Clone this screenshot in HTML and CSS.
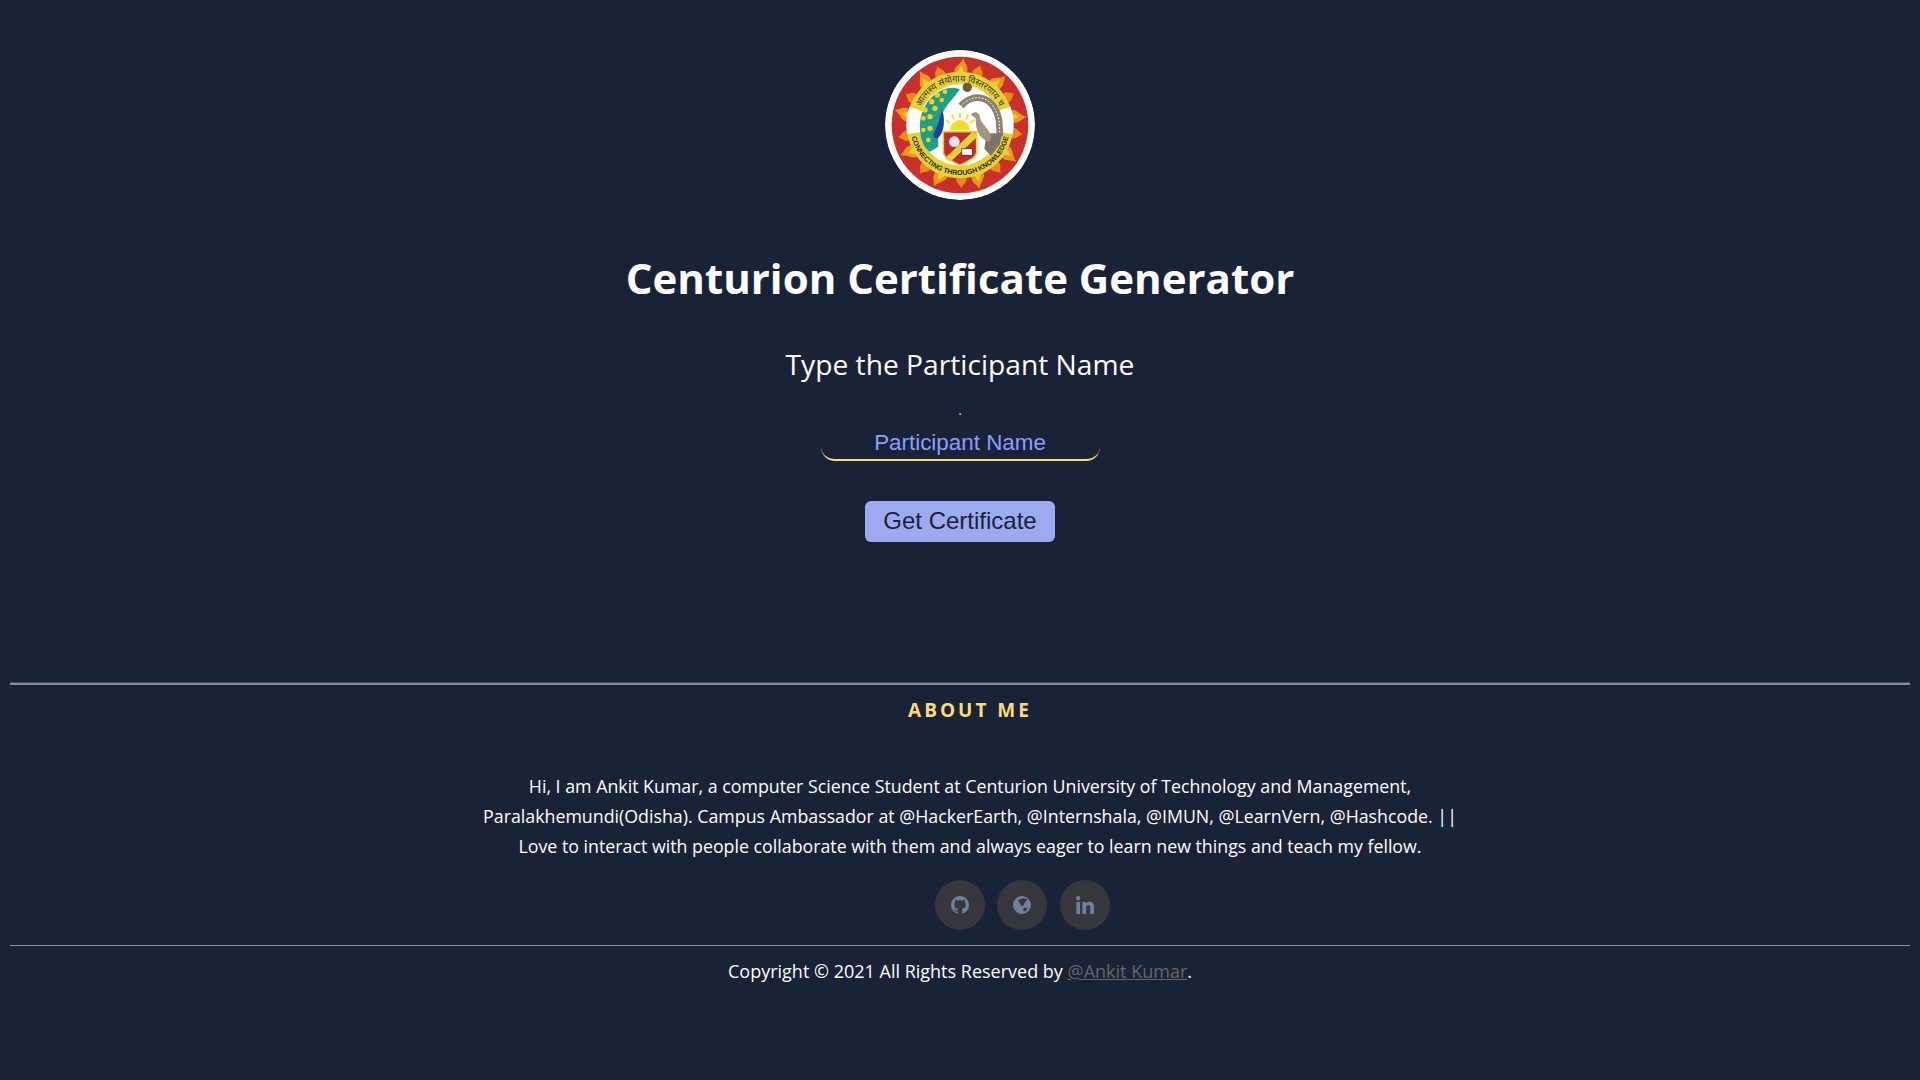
FILE: index.html
```html
<!DOCTYPE html>
<html lang="en">
<head>
  <meta charset="UTF-8" />
  <title>Centurion Certificate Generator</title>
  <link rel="stylesheet" href="styles.css">
</head>
<body>

  <div class="generator">
    <svg class="logo" viewBox="0 0 450 450" aria-label="Centurion University logo">
      <defs>
        <g id="flame">
          <path d="M236 24 C238 42 252 46 246 68 L208 68 C204 52 224 46 236 24Z" fill="#e8981e"/>
          <path d="M229 46 C231 54 237 58 235 68 L217 68 C216 60 225 56 229 46Z" fill="#f4c62f"/>
        </g>
        <g id="flameSmall">
          <path d="M218 36 C222 48 236 50 234 68 L204 68 C198 54 212 50 218 36Z" fill="#e98a1c"/>
        </g>
        <path id="topArc" d="M95 225 A130 130 0 0 1 355 225"/>
        <path id="bottomArc" d="M75 225 A150 150 0 0 0 375 225"/>
      </defs>
      <circle cx="225" cy="225" r="225" fill="#fff"/>
      <circle cx="225" cy="225" r="205" fill="#c8312b"/>
      <use href="#flame"/>
      <use href="#flameSmall" transform="rotate(21 225 225)"/>
      <use href="#flame" transform="rotate(40 225 225)"/>
      <use href="#flameSmall" transform="rotate(62 225 225)"/>
      <use href="#flame" transform="rotate(80 225 225)"/>
      <use href="#flameSmall" transform="rotate(101 225 225)"/>
      <use href="#flame" transform="rotate(120 225 225)"/>
      <use href="#flameSmall" transform="rotate(142 225 225)"/>
      <use href="#flame" transform="rotate(160 225 225)"/>
      <use href="#flameSmall" transform="rotate(181 225 225)"/>
      <use href="#flame" transform="rotate(200 225 225)"/>
      <use href="#flameSmall" transform="rotate(222 225 225)"/>
      <use href="#flame" transform="rotate(240 225 225)"/>
      <use href="#flameSmall" transform="rotate(261 225 225)"/>
      <use href="#flame" transform="rotate(280 225 225)"/>
      <use href="#flameSmall" transform="rotate(302 225 225)"/>
      <use href="#flame" transform="rotate(320 225 225)"/>
      <use href="#flameSmall" transform="rotate(341 225 225)"/>
      <circle cx="225" cy="225" r="160" fill="#e8d03c"/>
      <circle cx="225" cy="225" r="122" fill="#fff"/>
      <path d="M92.500 177 A141 141 0 0 0 86 249.500 M357.500 177 A141 141 0 0 1 364 249.500" fill="none" stroke="#fff" stroke-width="40"/>
      <text class="logo-hindi"><textPath href="#topArc" startOffset="50%">आत्मस्य संयोगाय विस्तरणाय च</textPath></text>
      <text class="logo-motto"><textPath href="#bottomArc" startOffset="50%">CONNECTING THROUGH KNOWLEDGE</textPath></text>

      <!-- peacock -->
      <path d="M225 118 C190 100 120 130 106 210 C100 255 115 295 135 305 L160 290 C160 260 155 230 170 195 C180 170 205 145 225 118Z" fill="#1f9e8a"/>
      <g fill="#f5d21f">
        <circle cx="180" cy="125" r="7"/>
        <circle cx="157" cy="135" r="8"/>
        <circle cx="140" cy="155" r="8"/>
        <circle cx="120" cy="180" r="8"/>
        <circle cx="115" cy="205" r="7"/>
        <circle cx="115" cy="240" r="7"/>
        <circle cx="130" cy="270" r="7"/>
        <circle cx="170" cy="150" r="7"/>
        <circle cx="150" cy="175" r="8"/>
        <circle cx="135" cy="200" r="8"/>
        <circle cx="135" cy="235" r="8"/>
      </g>
      <path d="M172 180 C162 210 160 225 146 250 C144 262 150 268 158 265 C176 250 182 215 172 180Z" fill="#1f3d9a"/>

      <!-- dove and swirl -->
      <circle cx="247" cy="112" r="14" fill="#6a5a38"/>
      <g fill="none">
        <path d="M228 168 C262 128 325 132 342 210 L345 258" stroke="#8c8070" stroke-width="20"/>
        <path d="M228 168 C262 128 325 132 342 210 L345 258" stroke="#fff" stroke-width="3" stroke-dasharray="5 5"/>
      </g>
      <path d="M305 250 L352 250 L345 282 L318 318 L298 296Z" fill="#7d7566"/>
      <path d="M258 195 C265 182 282 185 285 200 C288 225 315 235 318 262 C318 282 300 274 285 257 C272 240 272 215 272 205Z" fill="#a59684"/>

      <!-- sun and shield -->
      <path d="M195 240 A30 30 0 0 1 255 240Z" fill="#f7dc2e"/>
      <path d="M225 203 v-14 M207 207 l-7 -13 M243 207 l7 -13 M194 219 l-12 -9 M256 219 l12 -9" stroke="#f7dc2e" stroke-width="6"/>
      <path d="M175 245 H275 V305 C275 325 245 335 225 346 C205 335 175 325 175 305Z" fill="#c02a2a" stroke="#e8d03c" stroke-width="5"/>
      <path d="M180 325 L262 245 L276 250 L276 262 L196 335Z" fill="#e8d03c"/>
      <circle cx="208" cy="275" r="16" fill="#dfe6f4"/>
      <path d="M230 296 h32 v20 h-32Z" fill="#fff" stroke="#222" stroke-width="2"/>
    </svg>

    <h1 class="title">Centurion Certificate Generator</h1>
    <h2 class="subtitle">Type the Participant Name</h2>
    <div class="dot">.</div>
    <input class="name-input" type="text" placeholder="Participant Name">
    <button class="get-btn">Get Certificate</button>
  </div>

  <hr class="rule-thick">
  <div class="about">
    <h3 class="about-title">ABOUT ME</h3>
    <p class="about-text">Hi, I am Ankit Kumar, a computer Science Student at Centurion University of Technology and Management, Paralakhemundi(Odisha). Campus Ambassador at @HackerEarth, @Internshala, @IMUN, @LearnVern, @Hashcode. || Love to interact with people collaborate with them and always eager to learn new things and teach my fellow.</p>
    <div class="socials">
      <a class="social" href="#" aria-label="GitHub">
        <svg viewBox="0 0 16 16"><path d="M8 0C3.58 0 0 3.58 0 8c0 3.54 2.29 6.53 5.47 7.59.4.07.55-.17.55-.38 0-.19-.01-.82-.01-1.49-2.01.37-2.53-.49-2.69-.94-.09-.23-.48-.94-.82-1.13-.28-.15-.68-.52-.01-.53.63-.01 1.08.58 1.23.82.72 1.21 1.87.87 2.33.66.07-.52.28-.87.51-1.07-1.78-.2-3.64-.89-3.64-3.95 0-.87.31-1.59.82-2.15-.08-.2-.36-1.02.08-2.12 0 0 .67-.21 2.2.82.64-.18 1.32-.27 2-.27.68 0 1.36.09 2 .27 1.53-1.04 2.2-.82 2.2-.82.44 1.1.16 1.92.08 2.12.51.56.82 1.27.82 2.15 0 3.07-1.87 3.75-3.65 3.95.29.25.54.73.54 1.48 0 1.07-.01 1.93-.01 2.2 0 .21.15.46.55.38A8.013 8.013 0 0016 8c0-4.42-3.58-8-8-8z"/></svg>
      </a>
      <a class="social" href="#" aria-label="Website">
        <svg viewBox="0 0 16 16"><path fill-rule="evenodd" d="M8 0a8 8 0 1 0 0 16A8 8 0 0 0 8 0zM4.500 3.500C6 2.500 7.500 3.200 8.800 2L12.500 2.600C12 4.500 10.500 5 10.300 6.200L8.700 9 7 8.200C6.500 6.500 5 5.500 4.500 3.500zM9.500 10.200L13 10.800 11.200 13.500 9 13.300z"/></svg>
      </a>
      <a class="social" href="#" aria-label="LinkedIn">
        <svg viewBox="0 0 448 448"><path d="M100.28 448H7.4V148.9h92.88zM53.79 108.1C24.09 108.1 0 83.5 0 53.8a53.79 53.79 0 0 1 107.58 0c0 29.7-24.1 54.3-53.79 54.3zM447.9 448h-92.68V302.4c0-34.7-.7-79.2-48.29-79.2-48.29 0-55.69 37.7-55.69 76.7V448h-92.78V148.9h89.08v40.8h1.3c12.4-23.5 42.69-48.3 87.88-48.3 94 0 111.28 61.9 111.28 142.3V448z"/></svg>
      </a>
    </div>
  </div>
  <hr class="rule-thin">
  <p class="copyright">Copyright © 2021 All Rights Reserved by <a href="#">@Ankit Kumar</a>.</p>

</body>
</html>
```

FILE: styles.css
```css
body {
  background: #1a2238;
  color: #fff;
  font-family: 'Open Sans', 'Noto Sans', sans-serif;
  margin: 0;
  padding: 0 10px;
}

.generator {
  display: flex;
  flex-direction: column;
  align-items: center;
  padding-top: 50px;
}

.logo {
  width: 150px;
  height: 150px;
  border-radius: 50%;
}

.logo-hindi {
  font-family: 'Noto Sans', 'DejaVu Sans', sans-serif;
  font-size: 27px;
  fill: #3a3520;
  text-anchor: middle;
}

.logo-motto {
  font-family: 'Liberation Sans', sans-serif;
  font-size: 21px;
  font-weight: 700;
  fill: #2b2a1a;
  text-anchor: middle;
}

.title {
  font-size: 42px;
  font-weight: 700;
  line-height: 56px;
  margin: 50px 0 0;
}

.subtitle {
  font-size: 28.2px;
  font-weight: 400;
  line-height: 38px;
  margin: 39px 0 1px;
}

.dot {
  font-size: 12px;
  line-height: 16px;
  margin-top: 19px;
}

.name-input {
  background: transparent;
  border: none;
  border-bottom: 2px solid #fadd7a;
  border-radius: 0 0 14px 14px;
  box-sizing: border-box;
  color: #9daaf2;
  font-family: 'Liberation Sans', sans-serif;
  font-size: 22.4px;
  height: 40px;
  margin-top: 2px;
  outline: none;
  padding: 5px 0 0;
  text-align: center;
  width: 279px;
}

.name-input::placeholder {
  color: #8c9eff;
  opacity: 1;
}

.get-btn {
  background: #9daaf2;
  border: none;
  border-radius: 6px;
  color: #1a2238;
  font-family: 'Liberation Sans', sans-serif;
  font-size: 24px;
  height: 41px;
  margin-top: 40px;
  padding: 0 0 1px;
  width: 190px;
}

.rule-thick {
  border: none;
  border-top: 1px solid #454b5c;
  border-bottom: 2px solid #868a96;
  margin: 140px 0 0;
}

.about {
  text-align: center;
}

.about-title {
  color: #fadd7a;
  font-size: 19px;
  font-weight: 700;
  letter-spacing: 3px;
  line-height: 26px;
  margin: 12px 0 0;
  padding-left: 20px;
}

.about-text {
  font-size: 17.8px;
  line-height: 30px;
  margin: 48px auto 0;
  padding-left: 20px;
  width: 985px;
}

.socials {
  display: flex;
  gap: 12.5px;
  justify-content: center;
  margin-top: 19px;
  padding-left: 124px;
}

.social {
  align-items: center;
  background: #35373d;
  border-radius: 50%;
  display: flex;
  height: 50px;
  justify-content: center;
  width: 50px;
}

.social svg {
  fill: #6f8198;
  height: 18px;
  width: 18px;
}

.rule-thin {
  border: none;
  border-top: 1px solid #8a8f9b;
  margin: 15px 0 0;
}

.copyright {
  font-size: 18px;
  line-height: 26px;
  margin: 12px 0 0;
  text-align: center;
}

.copyright a {
  color: #666;
}
```
